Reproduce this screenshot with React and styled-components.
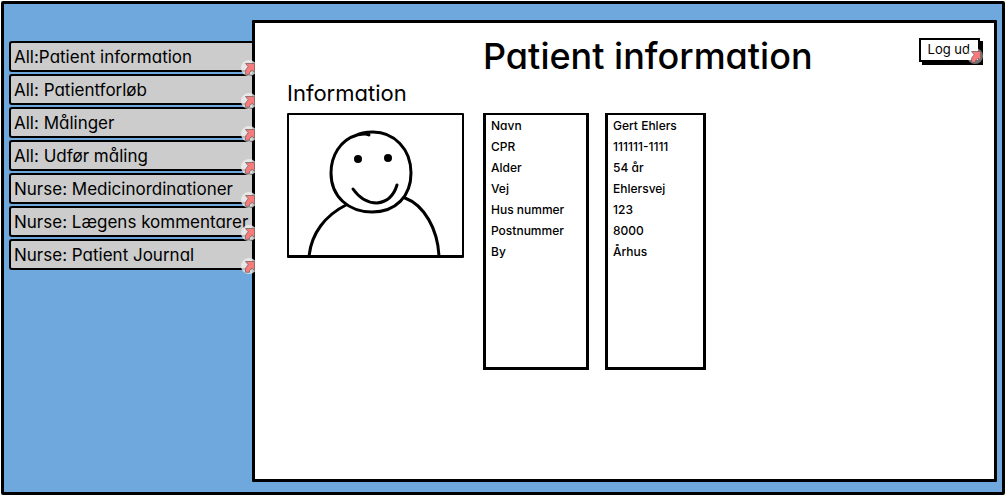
import React from "react";
import styled, { createGlobalStyle } from "styled-components";

const GlobalStyle = createGlobalStyle`
  *, *::before, *::after { box-sizing: border-box; }
  body {
    margin: 0;
    background: #fff;
    color: #000;
    font-family: Inter, "Open Sans", sans-serif;
    font-feature-settings: "cv11";
  }
`;

const Frame = styled.div`
  display: flex;
  min-height: calc(100vh - 2px);
  margin: 1px;
  padding: 16px 5px 10px 5px;
  border: 3px solid #000;
  border-radius: 2px;
  background: #6fa8dc;
`;

const Sidebar = styled.nav`
  flex: none;
  display: flex;
  flex-direction: column;
  gap: 2px;
  width: 243px;
  padding-top: 21px;
`;

const NavItem = styled.a`
  position: relative;
  display: flex;
  align-items: center;
  height: 31px;
  padding-left: 3px;
  border: 2px solid #000;
  border-right: 0;
  border-radius: 3px 0 0 3px;
  background: #ccc;
  color: inherit;
  font-size: 17px;
  line-height: 24px;
  white-space: nowrap;
  text-decoration: none;
`;

const NavBadge = styled.span`
  position: absolute;
  right: -3px;
  bottom: -6px;
  z-index: 1;
  width: 14px;
  height: 16px;
  overflow: hidden;
`;

const Panel = styled.main`
  flex: 1;
  min-width: 0;
  padding: 10px 12px 32px 32px;
  border: 3px solid #000;
  border-radius: 1px;
  background: #fff;
`;

const Header = styled.header`
  display: grid;
  grid-template-columns: 196px 1fr auto;
  align-items: start;
`;

const Title = styled.h1`
  grid-column: 2;
  margin: 0;
  font-size: 36px;
  font-weight: 500;
  line-height: 46px;
  white-space: nowrap;
`;

const LogoutButton = styled.button`
  position: relative;
  height: 24px;
  margin: 5px 2px 0 0;
  padding: 0 8px 2px 7px;
  border: 2px solid #000;
  border-radius: 0;
  background: #fff;
  box-shadow: 3px 3px 0 #000;
  color: inherit;
  font: inherit;
  font-size: 13px;
  line-height: 18px;
`;

const ButtonBadge = styled.span`
  position: absolute;
  right: -5px;
  bottom: -4px;
  width: 16px;
  height: 16px;
`;

const Heading = styled.h2`
  margin: 0;
  font-size: 22px;
  font-weight: 400;
  line-height: 28px;
`;

const Details = styled.div`
  display: flex;
  align-items: flex-start;
  gap: 3px;
  margin-top: 6px;
`;

const Portrait = styled.svg`
  flex: none;
  width: 177px;
  height: 145px;
  border: 2px solid #000;
  border-bottom-width: 3px;
  border-radius: 1px;
`;

const Table = styled.table`
  border-spacing: 16px 0;
  font-size: 12px;
  font-weight: 500;
  line-height: 21px;

  th, td {
    height: 21px;
    padding: 0 5px;
    border: 0 solid #000;
    border-width: 0 3px;
    font-weight: inherit;
    text-align: left;
    vertical-align: top;
    white-space: nowrap;
  }
  th { width: 106px; }
  td { width: 101px; }
  tr:first-child > * { border-top-width: 2px; }
  tr:last-child > * { height: 129px; border-bottom-width: 3px; }
`;

const Icon = styled.svg`
  display: block;
  width: 16px;
  height: 16px;
`;

const links = [
  "All:Patient information",
  "All: Patientforløb",
  "All: Målinger",
  "All: Udfør måling",
  "Nurse: Medicinordinationer",
  "Nurse: Lægens kommentarer",
  "Nurse: Patient Journal",
];

const patient = [
  ["Navn", "Gert Ehlers"],
  ["CPR", "111111-1111"],
  ["Alder", "54 år"],
  ["Vej", "Ehlersvej"],
  ["Hus nummer", "123"],
  ["Postnummer", "8000"],
  ["By", "Århus"],
];

function LinkIcon({ fill, opacity }) {
  return (
    <Icon viewBox="0 0 16 16" aria-hidden="true">
      <circle cx="8" cy="8" r="8" fill={fill} opacity={opacity} />
      <path
        d="M4.500 3.500H13.500V12.500L11.300 10.300C9 11.300 8.300 12.500 8.500 14.300H4.500C3.800 11 5 8.800 7.300 6.800Z"
        fill="#f87b7b"
        stroke="#7d6060"
        strokeWidth="0.8"
        strokeLinejoin="round"
      />
    </Icon>
  );
}

export default function App() {
  return (
    <>
      <GlobalStyle />
      <Frame>
        <Sidebar>
          {links.map((label) => (
            <NavItem href="#" key={label}>
              {label}
              <NavBadge><LinkIcon fill="#eee" opacity="0.8" /></NavBadge>
            </NavItem>
          ))}
        </Sidebar>
        <Panel>
          <Header>
            <Title>Patient information</Title>
            <LogoutButton type="button">
              Log ud
              <ButtonBadge><LinkIcon fill="#fff" opacity="0.45" /></ButtonBadge>
            </LogoutButton>
          </Header>
          <Heading>Information</Heading>
          <Details>
            <Portrait viewBox="289 115 173 140" role="img" aria-label="Gert Ehlers">
              <g fill="none" stroke="#000" strokeWidth="3" strokeLinecap="round">
                <path d="M309 257C311 233 326 215 346 205" />
                <path d="M405 198C424 205 438 229 439 257" />
                <path d="M369 135C366 133 362 134 357 135C340 140 331 156 331 173C331 197 349 212 372 212C396 212 411 196 411 173C411 149 394 132 373 132C366 132 360 133 355 136" />
                <path d="M353 189C360 199 369 203 377 203C387 202 394 195 397 185" />
              </g>
              <circle cx="358" cy="159" r="4" />
              <circle cx="388" cy="158" r="4" />
            </Portrait>
            <Table>
              <tbody>
                {patient.map(([name, value]) => (
                  <tr key={name}>
                    <th scope="row">{name}</th>
                    <td>{value}</td>
                  </tr>
                ))}
              </tbody>
            </Table>
          </Details>
        </Panel>
      </Frame>
    </>
  );
}
